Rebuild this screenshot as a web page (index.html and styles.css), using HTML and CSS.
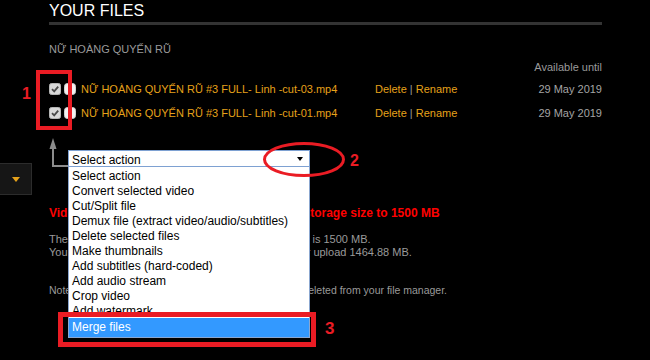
FILE: index.html
```html
<!DOCTYPE html>
<html lang="en">
<head>
  <meta charset="UTF-8">
  <meta name="viewport" content="width=device-width, initial-scale=1.0">
  <title>Your files</title>
  <link rel="stylesheet" href="styles.css">
</head>
<body>
  <div class="page">
    <aside class="side">
      <div class="side-toggle"><span class="tri"></span></div>
    </aside>

    <main class="files">
      <h1 class="title">YOUR FILES</h1>
      <h2 class="folder">NỮ HOÀNG QUYẾN RŨ</h2>

      <div class="file-head">Available until</div>

      <div class="file-row">
        <div class="checks">
          <svg class="cb" viewBox="0 0 12 12"><rect x="0.5" y="0.5" width="11" height="11" rx="2" fill="#d9d9d9" stroke="#b5b5b5"/><path d="M3 6.2 L5.2 8.4 L9.2 3.6" fill="none" stroke="#4a4a4a" stroke-width="1.8"/></svg>
          <svg class="cb" viewBox="0 0 12 12"><rect x="0.5" y="0.5" width="11" height="11" rx="3" fill="#f2f2f2" stroke="#d0d0d0"/></svg>
        </div>
        <span class="name">NỮ HOÀNG QUYẾN RŨ #3 FULL- Linh -cut-03.mp4</span>
        <span class="actions">Delete <span class="sep">|</span> Rename</span>
        <span class="date">29 May 2019</span>
      </div>
      <div class="file-row">
        <div class="checks">
          <svg class="cb" viewBox="0 0 12 12"><rect x="0.5" y="0.5" width="11" height="11" rx="2" fill="#d9d9d9" stroke="#b5b5b5"/><path d="M3 6.2 L5.2 8.4 L9.2 3.6" fill="none" stroke="#4a4a4a" stroke-width="1.8"/></svg>
          <svg class="cb" viewBox="0 0 12 12"><rect x="0.5" y="0.5" width="11" height="11" rx="3" fill="#f2f2f2" stroke="#d0d0d0"/></svg>
        </div>
        <span class="name">NỮ HOÀNG QUYẾN RŨ #3 FULL- Linh -cut-01.mp4</span>
        <span class="actions">Delete <span class="sep">|</span> Rename</span>
        <span class="date">29 May 2019</span>
      </div>

      <div class="bulk">
        <svg class="bulk-arrow" width="19" height="31" viewBox="0 0 19 31">
          <polygon points="0.5,12 4,1 7.5,12" fill="#8c8c8c"/>
          <path d="M4 11 V29 H19" fill="none" stroke="#8c8c8c" stroke-width="2"/>
        </svg>
        <div class="select-wrap">
          <div class="select">Select action<span class="caret"></span></div>
          <div class="select-list">
            <div class="select-scroll">
              <div class="select-item">Select action</div>
              <div class="select-item">Convert selected video</div>
              <div class="select-item">Cut/Split file</div>
              <div class="select-item">Demux file (extract video/audio/subtitles)</div>
              <div class="select-item">Delete selected files</div>
              <div class="select-item">Make thumbnails</div>
              <div class="select-item">Add subtitles (hard-coded)</div>
              <div class="select-item">Add audio stream</div>
              <div class="select-item">Crop video</div>
              <div class="select-item">Add watermark</div>
            </div>
            <div class="select-item active">Merge files</div>
          </div>
        </div>
      </div>

      <p class="warn">Video file limit reached, upgrade to increase storage size to 1500 MB</p>
      <p class="quota">The maximum storage size for all your converted files is 1500 MB.<br>You have already used 35.12 MB. Space available for upload 1464.88 MB.</p>
      <p class="note">Note: All files older than 24 hours will be automatically deleted from your file manager.</p>
    </main>

    <div class="mark mark-1">1</div>
    <div class="mark-box mark-box-1"></div>
    <svg class="mark-ring" width="86" height="38" viewBox="0 0 86 38"><ellipse cx="42" cy="18.5" rx="39.5" ry="16" fill="none" stroke="#ea1c24" stroke-width="3"/></svg>
    <div class="mark mark-2">2</div>
    <div class="mark-box mark-box-3"></div>
    <div class="mark mark-3">3</div>
  </div>
</body>
</html>
```

FILE: styles.css
```css
html, body {
  margin: 0;
  padding: 0;
}
body {
  background-color: #000;
  font-family: "Liberation Sans", Arial, sans-serif;
}
.page {
  position: relative;
  display: flex;
  width: 650px;
  height: 360px;
  overflow: hidden;
}

/* left side toggle */
.side {
  width: 49px;
  flex-shrink: 0;
}
.side-toggle {
  width: 32px;
  height: 32px;
  margin-top: 163px;
  box-sizing: border-box;
  background-color: #161616;
  border: 1px solid #2c2c2c;
  border-left: none;
  display: flex;
  align-items: center;
  justify-content: center;
}
.tri {
  width: 0;
  height: 0;
  border-left: 4px solid transparent;
  border-right: 4px solid transparent;
  border-top: 5px solid #e6a21a;
  margin-top: 1px;
}

/* main column */
.files {
  width: 553px;
  flex-shrink: 0;
}
.title {
  margin: 0;
  padding: 2px 0;
  font-size: 16px;
  line-height: 18px;
  font-weight: normal;
  color: #fff;
  border-bottom: 3px solid #333;
}
.folder {
  margin: 18px 0 0;
  font-size: 11px;
  line-height: 13px;
  font-weight: normal;
  color: #9a9a9a;
}
.file-head {
  margin-top: 5px;
  text-align: right;
  font-size: 11px;
  line-height: 13px;
  color: #9a9a9a;
}
.file-row {
  display: flex;
  align-items: center;
  height: 24px;
  font-size: 11px;
  line-height: 13px;
}
.file-head + .file-row {
  margin-top: 3px;
}
.checks {
  display: flex;
  gap: 3px;
  width: 32px;
}
.cb {
  width: 12px;
  height: 12px;
  display: block;
}
.name {
  width: 294px;
  color: #e6a21a;
  white-space: nowrap;
}
.actions {
  color: #e6a21a;
}
.sep {
  color: #9a9a9a;
}
.date {
  margin-left: auto;
  color: #a5a5a5;
}

/* bulk action select */
.bulk {
  display: flex;
  margin-top: 12px;
  height: 31px;
}
.bulk-arrow {
  display: block;
  flex-shrink: 0;
}
.select-wrap {
  position: relative;
  width: 242px;
  margin-top: 13px;
  font-size: 12px;
}
.select {
  position: relative;
  height: 17px;
  box-sizing: border-box;
  padding-left: 3px;
  line-height: 18px;
  background-color: #fff;
  border: 1px solid #7ea1d2;
  color: #000;
}
.caret {
  position: absolute;
  right: 6px;
  top: 6px;
  width: 0;
  height: 0;
  border-left: 3px solid transparent;
  border-right: 3px solid transparent;
  border-top: 4px solid #000;
}
.select-list {
  position: absolute;
  top: 16px;
  left: 0;
  width: 100%;
  box-sizing: border-box;
  background-color: #fff;
  border: 1px solid #8ba7d0;
  border-top-color: #7ea1d2;
  padding-top: 2px;
  z-index: 2;
}
.select-scroll {
  height: 145px;
  overflow: hidden;
  margin-bottom: 4px;
}
.select-item {
  height: 15px;
  line-height: 15px;
  padding-left: 3px;
  color: #000;
  white-space: nowrap;
}
.select-item.active {
  height: 19px;
  line-height: 19px;
  background-color: #3399ff;
  color: #fff;
}

/* info texts */
.warn {
  margin: 38px 0 0;
  font-size: 12px;
  line-height: 14px;
  font-weight: bold;
  color: #ff0000;
  white-space: nowrap;
}
.quota {
  margin: 13px 0 0;
  font-size: 11px;
  line-height: 13px;
  color: #9a9a9a;
  white-space: nowrap;
}
.note {
  margin: 25px 0 0;
  font-size: 10.5px;
  line-height: 13px;
  color: #9a9a9a;
  white-space: nowrap;
}

/* red annotations laid over the screenshot */
.mark {
  position: absolute;
  color: #ea1c24;
  font-weight: bold;
  font-size: 16px;
  line-height: 16px;
  z-index: 3;
}
.mark-1 {
  left: 22px;
  top: 86px;
}
.mark-2 {
  left: 350px;
  top: 153px;
}
.mark-3 {
  left: 325px;
  top: 321px;
  font-size: 17px;
}
.mark-box {
  position: absolute;
  box-sizing: border-box;
  border: 4px solid #ea1c24;
  z-index: 3;
}
.mark-box-1 {
  left: 36px;
  top: 70px;
  width: 36px;
  height: 60px;
}
.mark-box-3 {
  left: 58px;
  top: 312px;
  width: 258px;
  height: 35px;
  border-width: 5px;
}
.mark-ring {
  position: absolute;
  left: 262px;
  top: 141px;
  z-index: 3;
}
```
